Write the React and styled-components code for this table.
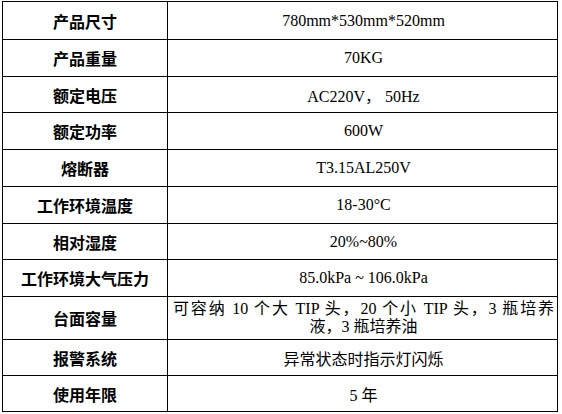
import React from 'react';
import styled, { createGlobalStyle } from 'styled-components';

const GlobalStyle = createGlobalStyle`
  html, body {
    margin: 0;
    padding: 0;
    background: #fff;
  }
`;

const rows = [
  { label: '产品尺寸', value: '780mm*530mm*520mm', h: 38 },
  { label: '产品重量', value: '70KG', h: 37 },
  { label: '额定电压', value: 'AC220V， 50Hz', h: 36 },
  { label: '额定功率', value: '600W', h: 37 },
  { label: '熔断器', value: 'T3.15AL250V', h: 37 },
  { label: '工作环境温度', value: '18-30°C', h: 37 },
  { label: '相对湿度', value: '20%~80%', h: 36 },
  { label: '工作环境大气压力', value: '85.0kPa ~ 106.0kPa', h: 37 },
  {
    label: '台面容量',
    lines: ['可容纳 10 个大 TIP 头，20 个小 TIP 头，3 瓶培养', '液，3 瓶培养油'],
    h: 43,
  },
  { label: '报警系统', value: '异常状态时指示灯闪烁', h: 36 },
  { label: '使用年限', value: '5 年', h: 36 },
];

const Table = styled.div`
  display: grid;
  grid-template-columns: 165px 390px;
  grid-template-rows: ${(p) => p.$rows.map((r) => `${r}px`).join(' ')};
  width: 556px;
  margin: 1px 0 0 2px;
  border-top: 1px solid #000;
  border-left: 1px solid #000;
  box-sizing: border-box;
  color: #000;
`;

const Cell = styled.div`
  display: flex;
  flex-direction: column;
  align-items: center;
  justify-content: center;
  border-right: 1px solid #000;
  border-bottom: 1px solid #000;
  box-sizing: border-box;
  text-align: center;
`;

const Label = styled(Cell)`
  font-family: 'Noto Sans CJK SC', 'Liberation Sans', sans-serif;
  font-weight: 700;
  font-size: 16px;
`;

const Value = styled(Cell)`
  font-family: 'Liberation Serif', 'Noto Sans CJK SC', serif;
  font-size: 16px;
  padding: 0 3px 0 5px;
`;

const Line = styled.span`
  display: block;
  line-height: 18px;
  width: 100%;
  text-align: ${(p) => (p.$justify ? 'justify' : 'center')};
  text-align-last: ${(p) => (p.$justify ? 'justify' : 'center')};
  white-space: nowrap;
`;

export default function App() {
  return (
    <>
      <GlobalStyle />
      <Table $rows={rows.map((r) => r.h)}>
        {rows.map((r) => (
          <React.Fragment key={r.label}>
            <Label>{r.label}</Label>
            <Value>
              {r.lines
                ? r.lines.map((l, i) => (
                    <Line key={i} $justify={i === 0}>
                      {l}
                    </Line>
                  ))
                : r.value}
            </Value>
          </React.Fragment>
        ))}
      </Table>
    </>
  );
}
